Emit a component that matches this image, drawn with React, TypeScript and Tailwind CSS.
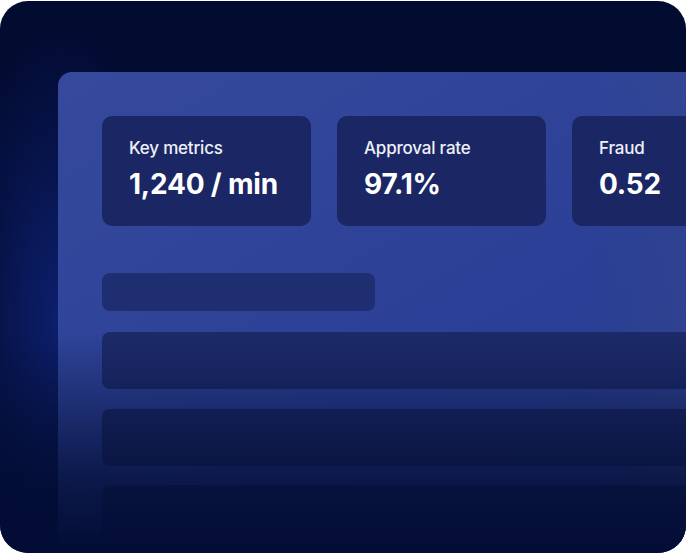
import React from "react";

const cards = [
  { label: "Key metrics", value: "1,240 / min" },
  { label: "Approval rate", value: "97.1%" },
  { label: "Fraud", value: "0.52" },
];

export default function App() {
  return (
    <div className="h-[554px] w-[686px] bg-white pt-px" style={{ fontFamily: "Inter, 'Noto Sans', sans-serif" }}>
      <div className="relative h-[552px] w-[686px] overflow-hidden rounded-[28px] bg-[#020b30] pl-[58px] pt-[71px]">
        <div className="pointer-events-none absolute inset-0 bg-[radial-gradient(ellipse_110px_300px_at_60px_320px,rgba(20,44,150,0.6),transparent)]" />
        <div className="relative h-full w-[660px] rounded-tl-[14px] bg-[linear-gradient(150deg,#36499c_0%,#2f4499_35%,#2a3f95_60%,#293d8f_100%)] pl-[44px] pt-[44px]">
          <div className="pointer-events-none absolute inset-0 rounded-tl-[14px] bg-[linear-gradient(90deg,transparent_80%,rgba(70,80,130,0.25)_100%)]" />
          <div className="relative flex gap-[26px]">
            {cards.map((c) => (
              <div
                key={c.label}
                className="flex h-[110px] w-[209px] shrink-0 flex-col rounded-[10px] bg-[#1b2764] pl-[27px] pt-[21px]"
              >
                <div className="text-[17px] font-medium leading-[22px] tracking-[-0.2px] text-[#eef0f8]">{c.label}</div>
                <div className="mt-[8px] text-[28px] font-bold leading-[34px] tracking-[-0.2px] text-white">{c.value}</div>
              </div>
            ))}
          </div>
          <div className="relative mt-[47px] flex flex-col">
            <div className="h-[38px] w-[273px] rounded-[8px] bg-[#1f2e70]" />
            <div className="mt-[21px] h-[57px] w-[640px] rounded-[8px] bg-[#1c2a69]" />
            <div className="mt-[20px] h-[57px] w-[640px] rounded-[8px] bg-[#1c2a69]" />
            <div className="mt-[19px] h-[57px] w-[640px] rounded-[8px] bg-[#1c2a69]" />
          </div>
        </div>
        <div className="pointer-events-none absolute inset-0 bg-[linear-gradient(180deg,transparent_0%,transparent_60%,rgba(3,13,52,0.35)_72%,rgba(2,12,50,0.75)_86%,#020c34_100%)]" />
      </div>
    </div>
  );
}
